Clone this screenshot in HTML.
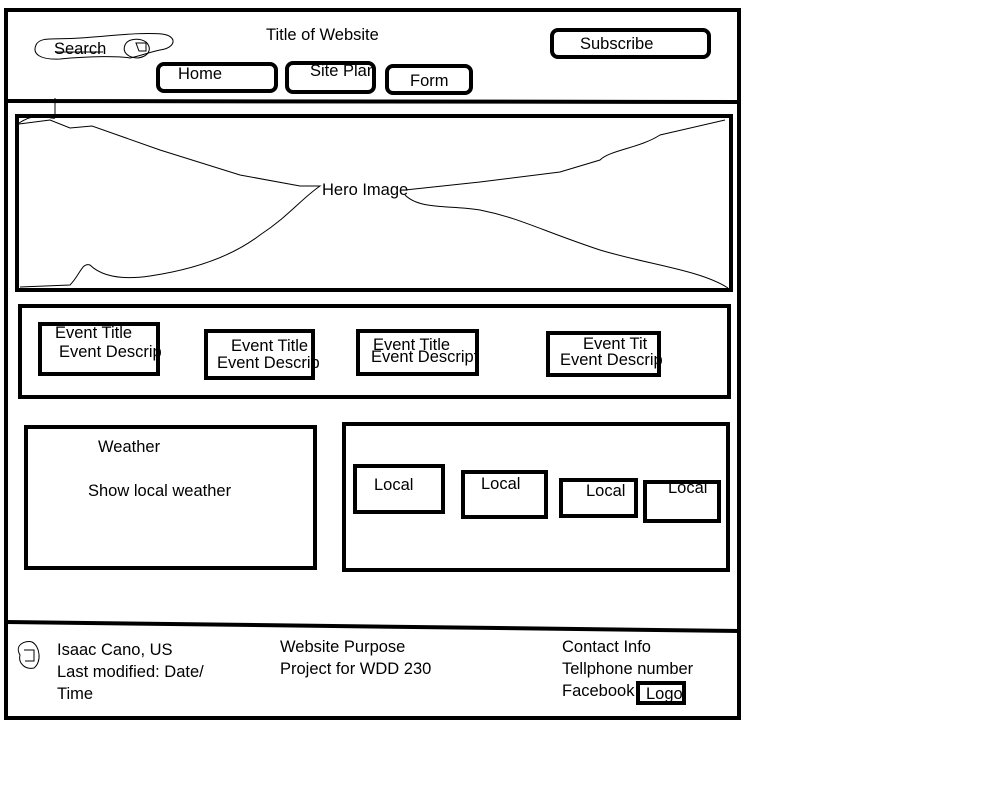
<!DOCTYPE html>
<html><head><meta charset="utf-8"><style>
html,body{margin:0;padding:0;background:#fff;width:1008px;height:807px;overflow:hidden}
svg text{font-family:"Liberation Sans",sans-serif;font-size:16.5px;fill:#000}
</style></head><body>
<svg width="1008" height="807" viewBox="0 0 1008 807" xmlns="http://www.w3.org/2000/svg">
<g fill="none" stroke="#000">
<rect x="6" y="10" width="733" height="708" stroke-width="4"/>
<path d="M6 101 L740 102" stroke-width="4"/>
<path d="M6 622 L740 631" stroke-width="4"/>
<rect x="17" y="116" width="714" height="174" stroke-width="4"/>
<rect x="20" y="306" width="709" height="91" stroke-width="4"/>
<rect x="26" y="427" width="289" height="141" stroke-width="4"/>
<rect x="344" y="424" width="384" height="146" stroke-width="4"/>
<rect x="158" y="64" width="118" height="27" rx="6" stroke-width="4"/>
<rect x="287" y="63" width="87" height="29" rx="6" stroke-width="4"/>
<rect x="387" y="66" width="84" height="27" rx="6" stroke-width="4"/>
<rect x="552" y="30" width="157" height="27" rx="6" stroke-width="4"/>
<rect x="40" y="324" width="118" height="50" stroke-width="4"/>
<rect x="206" y="331" width="107" height="47" stroke-width="4"/>
<rect x="358" y="331" width="119" height="43" stroke-width="4"/>
<rect x="548" y="333" width="111" height="42" stroke-width="4"/>
<rect x="355" y="466" width="88" height="46" stroke-width="4"/>
<rect x="463" y="472" width="83" height="45" stroke-width="4"/>
<rect x="561" y="480" width="75" height="36" stroke-width="4"/>
<rect x="645" y="482" width="74" height="39" stroke-width="4"/>
<rect x="638" y="683" width="46" height="20" stroke-width="4"/>
<g stroke-width="1">
<path d="M36 45 C40 36 55 40 80 38 C110 36 140 32 162 34 C178 36 176 48 160 50 C150 52 140 56 130 58 C120 56 90 56 60 59 C40 60 32 54 36 45 Z"/>
<path d="M125 45 C128 38 140 38 146 42 C152 48 150 56 138 58 C128 58 122 52 125 45 Z"/>
<path d="M136 43 L146 43 L146 51 L139 51 Z"/>
<path d="M55 52 L103 52"/>
<path d="M19 123 C40 110 50 120 55 118 M55 98 L55 115 M19 124 L50 120 L70 128 L92 126 L160 150 L240 175 L300 186 L320 186 C300 200 290 215 260 235 C230 258 190 270 150 276 C110 282 95 270 90 265 C82 262 80 275 70 285 L20 287"/>
<path d="M405 190 L480 182 L560 172 L600 160 C610 150 640 148 660 135 L725 120 M405 195 C420 210 450 205 480 210 C520 218 540 230 600 250 C650 265 700 270 728 288"/>
<path d="M20 655 C14 645 25 640 32 642 C40 646 42 662 34 668 C24 670 18 662 20 655 Z M24 650 L34 650 L34 661 L25 661"/>
</g>
</g>
<text x="266" y="40">Title of Website</text>
<text x="54" y="54">Search</text>
<text x="580" y="49">Subscribe</text>
<text x="178" y="79">Home</text>
<text x="310" y="76">Site Plan</text>
<text x="410" y="86">Form</text>
<text x="322" y="195">Hero Image</text>
<text x="55" y="338">Event Title</text>
<text x="59" y="357">Event Descrip</text>
<text x="231" y="351">Event Title</text>
<text x="217" y="368">Event Descrip</text>
<text x="373" y="350">Event Title</text>
<text x="371" y="362">Event Descript</text>
<text x="583" y="349">Event Tit</text>
<text x="560" y="365">Event Descrip</text>
<text x="98" y="452">Weather</text>
<text x="88" y="496">Show local weather</text>
<text x="374" y="490">Local</text>
<text x="481" y="489">Local</text>
<text x="586" y="496">Local</text>
<text x="668" y="493">Local</text>
<text x="57" y="655">Isaac Cano, US</text>
<text x="57" y="677">Last modified: Date/</text>
<text x="57" y="699">Time</text>
<text x="280" y="652">Website Purpose</text>
<text x="280" y="674">Project for WDD 230</text>
<text x="562" y="652">Contact Info</text>
<text x="562" y="674">Tellphone number</text>
<text x="562" y="696">Facebook</text>
<text x="646" y="699">Logo</text>
</svg>
</body></html>
